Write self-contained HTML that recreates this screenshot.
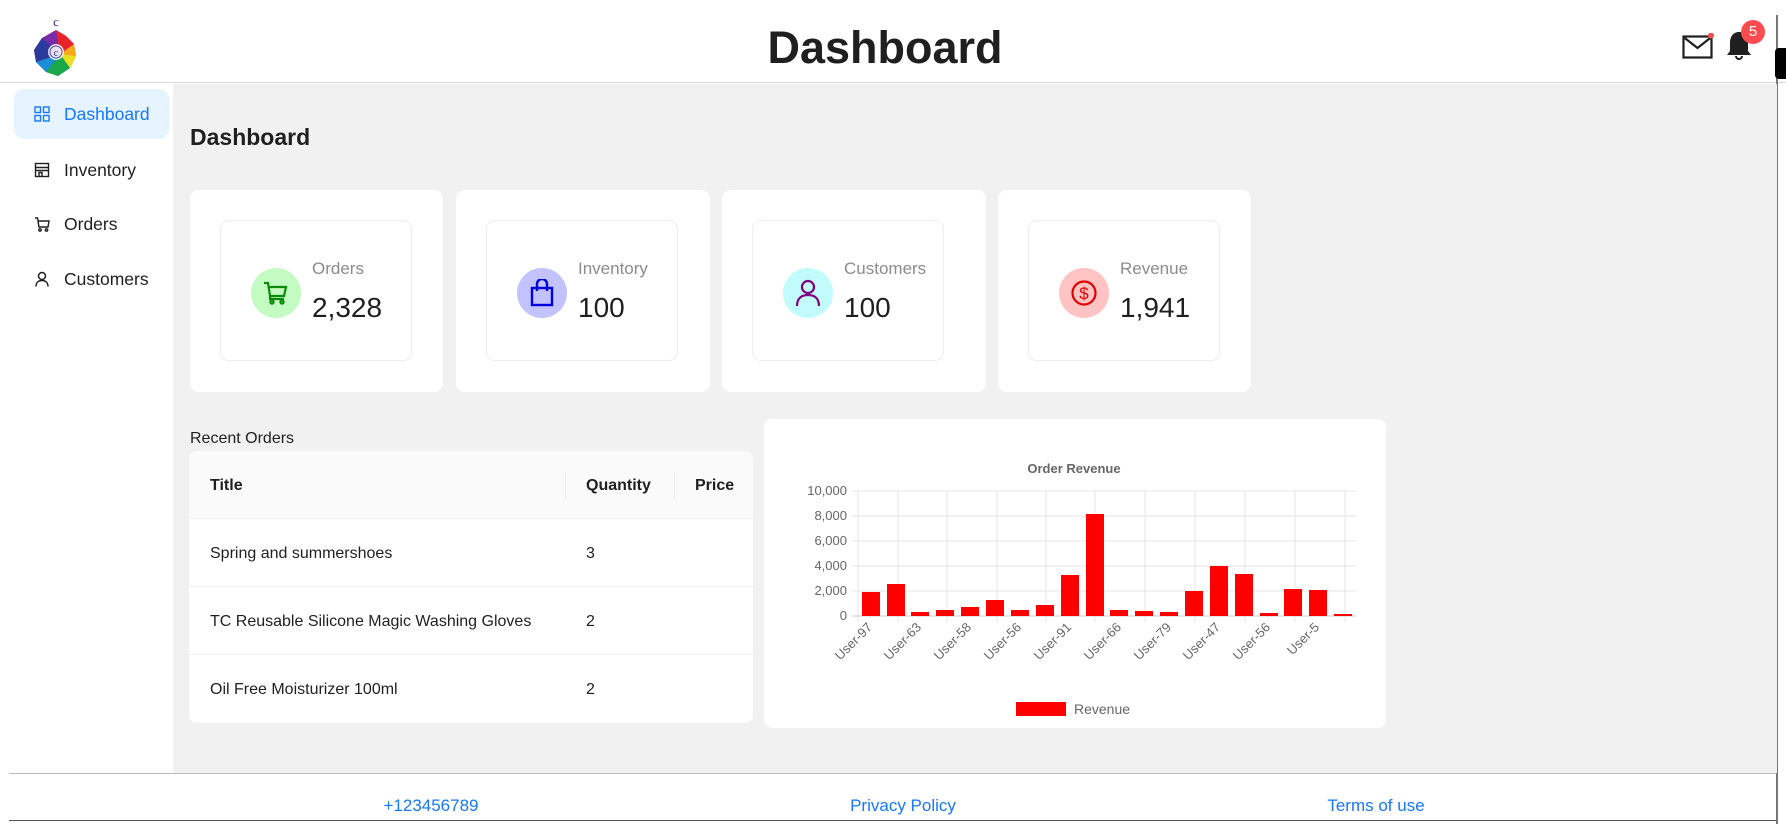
<!DOCTYPE html>
<html><head><meta charset="utf-8"><style>
*{box-sizing:border-box;margin:0;padding:0}
body{width:1786px;height:824px;overflow:hidden;background:#fff;font-family:"Liberation Sans",sans-serif;color:#1f1f1f;position:relative}
.abs{position:absolute}
.hdr{left:0;top:0;width:1786px;height:83px;border-bottom:1px solid #d9d9d9;background:#fff}
.side{left:0;top:84px;width:173px;height:689px;background:#fff}
.main{left:173px;top:84px;width:1604px;height:689px;background:#f1f1f1}
.nav{position:absolute;left:14px;width:155px;height:50px;border-radius:10px;display:flex;align-items:center;padding-left:20px;font-size:17.5px;color:#1f1f1f}
.nav svg{margin-right:14px}
.nav.act{background:#e6f4ff;color:#1677ff}
.card{position:absolute;top:190px;height:202px;background:#fff;border-radius:9px}
.inner{position:absolute;left:30px;top:30px;width:192px;height:141px;border:1px solid #eee;border-radius:9px}
.ic{position:absolute;left:30px;top:47px;width:50px;height:50px;border-radius:50%;display:flex;align-items:center;justify-content:center}
.lbl{position:absolute;left:91px;top:38px;font-size:17px;color:#8c8c8c}
.val{position:absolute;left:91px;top:71px;font-size:28px;color:#1f1f1f}
.tbl{left:189px;top:451px;width:564px;height:272px;background:#fff;border-radius:8px;overflow:hidden}
.row{position:absolute;left:0;width:564px;height:68px;border-bottom:1px solid #f0f0f0;font-size:16px}
.row span{position:absolute;top:26px}
.foot a{position:absolute;top:796px;color:#1677ff;font-size:17px;text-decoration:none;transform:translateX(-50%)}
</style></head><body>
<div class="abs hdr"></div>
<svg class="abs" style="left:30px;top:14px" width="52" height="66" viewBox="0 0 52 66">
<text x="26" y="12" font-size="13" fill="#3b2a8a" text-anchor="middle" font-family="Liberation Serif">c</text>
<polygon points="26,16 36,22 44,30 46,42 40,54 28,62 16,58 6,48 4,36 12,24" fill="#7b2aa8"/>
<polygon points="26,16 36,22 44,30 30,40" fill="#e8232a"/>
<polygon points="44,30 46,42 40,54 30,40" fill="#f6a91a"/>
<polygon points="40,54 28,62 16,58 30,40" fill="#1aa84a"/>
<polygon points="16,58 6,48 30,40" fill="#1a8fd8"/>
<polygon points="6,48 4,36 12,24 30,40" fill="#2c3a9e"/>
<polygon points="46,42 40,54 30,40" fill="#e8e020"/>
<circle cx="26" cy="38" r="8" fill="#fff" opacity=".85"/><circle cx="26" cy="38" r="6" fill="none" stroke="#5a4aa0"/>
<text x="26" y="42" font-size="10" fill="#3b2a8a" text-anchor="middle" font-family="Liberation Serif">c</text>
</svg>
<div class="abs" style="left:0;width:1770px;top:22px;text-align:center;font-size:45px;font-weight:bold;color:#1f1f1f">Dashboard</div>
<svg class="abs" style="left:1682px;top:33px" width="32" height="28" viewBox="0 0 32 28"><rect x="1.5" y="3.5" width="28" height="21" fill="none" stroke="#1f1f1f" stroke-width="2.2"/><path d="M1.5 4 L15.5 15 L29.5 4" fill="none" stroke="#1f1f1f" stroke-width="2.2"/><circle cx="29" cy="2.5" r="3" fill="#ff4d4f"/></svg>
<svg class="abs" style="left:1726px;top:30px" width="26" height="32" viewBox="0 0 26 32"><path d="M13 2 C7 2 4 7 4 13 V21 L1 25 H25 L22 21 V13 C22 7 19 2 13 2Z" fill="#1f1f1f"/><path d="M10 26 a3 3 0 0 0 6 0" fill="none" stroke="#1f1f1f" stroke-width="2"/></svg>
<div class="abs" style="left:1741px;top:20px;width:24px;height:24px;border-radius:50%;background:#ff4d4f;color:#fff;font-size:15px;text-align:center;line-height:24px">5</div>
<div class="abs" style="left:1776px;top:15px;width:2px;height:809px;background:#777"></div>
<div class="abs" style="left:1775px;top:48px;width:11px;height:31px;background:#000;border-radius:4px 0 0 4px"></div>

<div class="abs side">
<div class="nav act" style="top:5px"><svg width="16" height="16" viewBox="0 0 16 16" fill="none" stroke="#1677ff" stroke-width="1.4"><rect x="1" y="1" width="5.5" height="5.5"/><rect x="9.5" y="1" width="5.5" height="5.5"/><rect x="1" y="9.5" width="5.5" height="5.5"/><rect x="9.5" y="9.5" width="5.5" height="5.5"/></svg>Dashboard</div>
<div class="nav" style="top:61px"><svg width="16" height="16" viewBox="0 0 16 16" fill="none" stroke="#1f1f1f" stroke-width="1.4"><rect x="1.5" y="1.5" width="13" height="13"/><path d="M1.5 5.5H14.5M1.5 8.5H14.5M5 14.5V10.5H8V14.5"/></svg>Inventory</div>
<div class="nav" style="top:115px"><svg width="16" height="16" viewBox="0 0 16 16" fill="none" stroke="#1f1f1f" stroke-width="1.4"><path d="M1 2H3.5L5 11H14L15 5H4"/><circle cx="6" cy="14" r="1.2"/><circle cx="12.5" cy="14" r="1.2"/></svg>Orders</div>
<div class="nav" style="top:170px"><svg width="16" height="16" viewBox="0 0 16 16" fill="none" stroke="#1f1f1f" stroke-width="1.5"><circle cx="8" cy="5" r="3.5"/><path d="M2 15.5C2 11.5 4.5 9.5 8 9.5S14 11.5 14 15.5"/></svg>Customers</div>
</div>

<div class="abs main"></div>
<div class="abs" style="left:190px;top:124px;font-size:23px;font-weight:bold">Dashboard</div>

<div class="card" style="left:190px;width:253px"><div class="inner"><div class="ic" style="background:#c3fbc3"><svg width="26" height="24" viewBox="0 0 26 24" fill="none" stroke="#0a8a0a" stroke-width="2.2"><path d="M1 2H5L7 15H21L23 6H6"/><path d="M7 15V18H21"/><circle cx="9" cy="21" r="1.6"/><circle cx="19" cy="21" r="1.6"/></svg></div><div class="lbl">Orders</div><div class="val">2,328</div></div></div>
<div class="card" style="left:456px;width:254px"><div class="inner"><div class="ic" style="background:#c2c2ff"><svg width="24" height="28" viewBox="0 0 24 28" fill="none" stroke="#0000e0" stroke-width="2.4"><rect x="2" y="9" width="20" height="17"/><path d="M7 12V5a5 5 0 0 1 10 0V12"/></svg></div><div class="lbl">Inventory</div><div class="val">100</div></div></div>
<div class="card" style="left:722px;width:264px"><div class="inner"><div class="ic" style="background:#c2fbfb"><svg width="26" height="28" viewBox="0 0 26 28" fill="none" stroke="#800080" stroke-width="2.2"><circle cx="13" cy="8" r="6"/><path d="M2 27C2 19 7 16 13 16S24 19 24 27"/></svg></div><div class="lbl">Customers</div><div class="val">100</div></div></div>
<div class="card" style="left:998px;width:253px"><div class="inner"><div class="ic" style="background:#ffc3c3"><svg width="28" height="28" viewBox="0 0 28 28"><circle cx="14" cy="14" r="11.5" fill="none" stroke="#e00000" stroke-width="2.2"/><text x="14" y="20" font-size="17" fill="#e00000" text-anchor="middle" font-family="Liberation Sans">$</text></svg></div><div class="lbl">Revenue</div><div class="val">1,941</div></div></div>

<div class="abs" style="left:190px;top:430px;font-size:16px">Recent Orders</div>
<div class="abs tbl">
<div class="row" style="top:0;background:#fafafa;font-weight:bold"><span style="left:21px">Title</span><span style="left:397px">Quantity</span><span style="left:506px">Price</span>
<div style="position:absolute;left:376px;top:20px;width:1px;height:28px;background:#eee"></div><div style="position:absolute;left:485px;top:20px;width:1px;height:28px;background:#eee"></div></div>
<div class="row" style="top:68px"><span style="left:21px">Spring and summershoes</span><span style="left:397px">3</span></div>
<div class="row" style="top:136px"><span style="left:21px">TC Reusable Silicone Magic Washing Gloves</span><span style="left:397px">2</span></div>
<div class="row" style="top:204px;border:none"><span style="left:21px">Oil Free Moisturizer 100ml</span><span style="left:397px">2</span></div>
</div>

<div class="abs" style="left:764px;top:419px;width:622px;height:309px;background:#fff;border-radius:8px"></div>
<svg class="abs" style="left:0;top:0" width="1786" height="824" font-family="Liberation Sans">
<text x="1074" y="473" font-size="13" font-weight="bold" fill="#666" text-anchor="middle">Order Revenue</text>
<g stroke="#e5e5e5" stroke-width="1">
<line x1="852" y1="491" x2="1356" y2="491"/><line x1="852" y1="516" x2="1356" y2="516"/><line x1="852" y1="541" x2="1356" y2="541"/><line x1="852" y1="566" x2="1356" y2="566"/><line x1="852" y1="591" x2="1356" y2="591"/>
<line x1="858" y1="491" x2="858" y2="622"/><line x1="898" y1="491" x2="898" y2="622"/><line x1="947" y1="491" x2="947" y2="622"/><line x1="997" y1="491" x2="997" y2="622"/><line x1="1046" y1="491" x2="1046" y2="622"/><line x1="1095" y1="491" x2="1095" y2="622"/><line x1="1145" y1="491" x2="1145" y2="622"/><line x1="1195" y1="491" x2="1195" y2="622"/><line x1="1245" y1="491" x2="1245" y2="622"/><line x1="1295" y1="491" x2="1295" y2="622"/><line x1="1345" y1="491" x2="1345" y2="622"/>
</g>
<line x1="852" y1="616" x2="1356" y2="616" stroke="#ccc"/>
<g font-size="13" fill="#666" text-anchor="end">
<text x="847" y="495">10,000</text><text x="847" y="520">8,000</text><text x="847" y="545">6,000</text><text x="847" y="570">4,000</text><text x="847" y="595">2,000</text><text x="847" y="620">0</text>
</g>
<g fill="#ff0000">
<rect x="862" y="592" width="18" height="24"/><rect x="887" y="584" width="18" height="32"/><rect x="911" y="612" width="18" height="4"/><rect x="936" y="610" width="18" height="6"/><rect x="961" y="607" width="18" height="9"/><rect x="986" y="600" width="18" height="16"/><rect x="1011" y="610" width="18" height="6"/><rect x="1036" y="605" width="18" height="11"/><rect x="1061" y="575" width="18" height="41"/><rect x="1086" y="514" width="18" height="102"/><rect x="1110" y="610" width="18" height="6"/><rect x="1135" y="611" width="18" height="5"/><rect x="1160" y="612" width="18" height="4"/><rect x="1185" y="591" width="18" height="25"/><rect x="1210" y="566" width="18" height="50"/><rect x="1235" y="574" width="18" height="42"/><rect x="1260" y="613" width="18" height="3"/><rect x="1284" y="589" width="18" height="27"/><rect x="1309" y="590" width="18" height="26"/><rect x="1334" y="614" width="18" height="2"/>
</g>
<g font-size="13" fill="#666" text-anchor="end">
<text transform="translate(873,628) rotate(-45)">User-97</text>
<text transform="translate(922,628) rotate(-45)">User-63</text>
<text transform="translate(972,628) rotate(-45)">User-58</text>
<text transform="translate(1022,628) rotate(-45)">User-56</text>
<text transform="translate(1072,628) rotate(-45)">User-91</text>
<text transform="translate(1122,628) rotate(-45)">User-66</text>
<text transform="translate(1172,628) rotate(-45)">User-79</text>
<text transform="translate(1221,628) rotate(-45)">User-47</text>
<text transform="translate(1271,628) rotate(-45)">User-56</text>
<text transform="translate(1320,628) rotate(-45)">User-5</text>
</g>
<rect x="1016" y="702" width="50" height="14" fill="#ff0000"/>
<text x="1074" y="714" font-size="14" fill="#666">Revenue</text>
<line x1="9" y1="773.5" x2="1776" y2="773.5" stroke="#bbb"/>
<line x1="9" y1="820.5" x2="1776" y2="820.5" stroke="#555"/>
</svg>
<div class="foot"><a style="left:431px">+123456789</a><a style="left:903px">Privacy Policy</a><a style="left:1376px">Terms of use</a></div>
</body></html>
